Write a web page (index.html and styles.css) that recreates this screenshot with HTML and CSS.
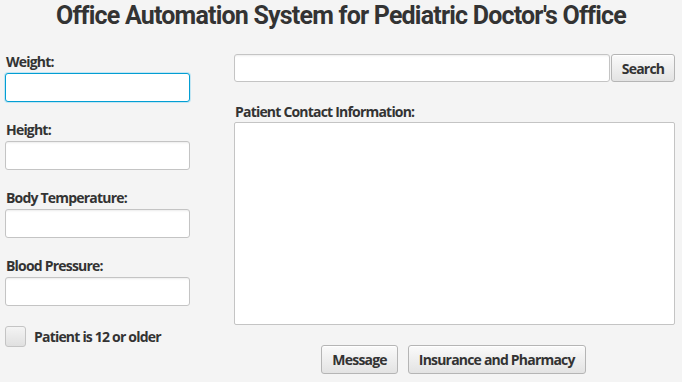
FILE: index.html
```html
<!DOCTYPE html>
<html lang="en">
<head>
    <meta charset="UTF-8">
    <title>Office Automation System</title>
    <link rel="stylesheet" href="styles.css">
</head>
<body>
    <h1 class="title">Office Automation System for Pediatric Doctor's Office</h1>

    <div class="main">
        <div class="vitals">
            <div class="field">
                <label for="weight">Weight:</label>
                <input type="text" id="weight" class="input focused">
            </div>
            <div class="field">
                <label for="height">Height:</label>
                <input type="text" id="height" class="input">
            </div>
            <div class="field">
                <label for="temp">Body Temperature:</label>
                <input type="text" id="temp" class="input">
            </div>
            <div class="field">
                <label for="bp">Blood Pressure:</label>
                <input type="text" id="bp" class="input">
            </div>
            <div class="check-row">
                <span class="check-box"></span>
                <span class="check-label">Patient is 12 or older</span>
            </div>
        </div>

        <div class="contact">
            <div class="search-row">
                <input type="text" class="input search-input">
                <button class="btn search-btn">Search</button>
            </div>
            <label class="contact-label">Patient Contact Information:</label>
            <div class="contact-area"></div>
            <div class="button-row">
                <button class="btn">Message</button>
                <button class="btn">Insurance and Pharmacy</button>
            </div>
        </div>
    </div>
</body>
</html>
```

FILE: styles.css
```css
:root {
    --bg: #f4f4f4;
    --text: #333333;
    --border: #c4c4c4;
    --focus: #039ed3;
}

* {
    margin: 0;
    padding: 0;
    box-sizing: border-box;
}

body {
    background-color: var(--bg);
    color: var(--text);
    font-family: 'Open Sans', sans-serif;
    font-size: 14px;
}

.title {
    font-family: Roboto, sans-serif;
    font-weight: 700;
    font-size: 25px;
    letter-spacing: -0.8px;
    text-align: center;
    line-height: 28px;
    padding-top: 2px;
    height: 54px;
}

.main {
    display: flex;
    padding: 0 7px 0 5px;
    gap: 44px;
}

label,
.check-label {
    display: block;
    font-weight: 700;
    letter-spacing: -0.8px;
    line-height: 16px;
}

.vitals {
    width: 185px;
    display: flex;
    flex-direction: column;
}

.field {
    display: flex;
    flex-direction: column;
    padding-bottom: 20px;
}

.field label {
    padding-left: 1px;
    margin-bottom: 3px;
}

.input {
    display: block;
    width: 100%;
    height: 29px;
    background: #ffffff;
    border: 1px solid var(--border);
    border-radius: 3px;
    box-shadow: inset 0 2px 2px -1px rgba(0,0,0,0.08);
    outline: none;
}

.input.focused {
    border-color: var(--focus);
    box-shadow: 0 0 0 1px #c3e6f3;
}

.check-row {
    display: flex;
    align-items: center;
    gap: 8px;
}

.check-box {
    width: 21px;
    height: 21px;
    border: 1px solid var(--border);
    border-radius: 3px;
    background: linear-gradient(#f4f4f4, #e0e0e0);
}

.contact {
    flex: 1;
    display: flex;
    flex-direction: column;
}

.search-row {
    display: flex;
}

.search-input {
    flex: 1;
    height: 28px;
}

.btn {
    height: 28px;
    padding: 0 10px;
    font-family: 'Open Sans', sans-serif;
    font-size: 14px;
    font-weight: 700;
    letter-spacing: -0.8px;
    color: var(--text);
    background: linear-gradient(#fafafa, #e3e3e3);
    border: 1px solid #b5b5b5;
    border-radius: 3px;
    box-shadow: inset 0 1px 0 #ffffff;
}

.search-btn {
    width: 64px;
    margin-left: 1px;
    padding: 0;
}

.contact-label {
    margin-top: 22px;
    margin-bottom: 2px;
    padding-left: 1px;
}

.contact-area {
    height: 203px;
    background: #ffffff;
    border: 1px solid var(--border);
    border-radius: 2px;
}

.button-row {
    display: flex;
    justify-content: center;
    gap: 10px;
    margin-top: 20px;
    padding-right: 2px;
}

.button-row .btn {
    height: 29px;
}
```
